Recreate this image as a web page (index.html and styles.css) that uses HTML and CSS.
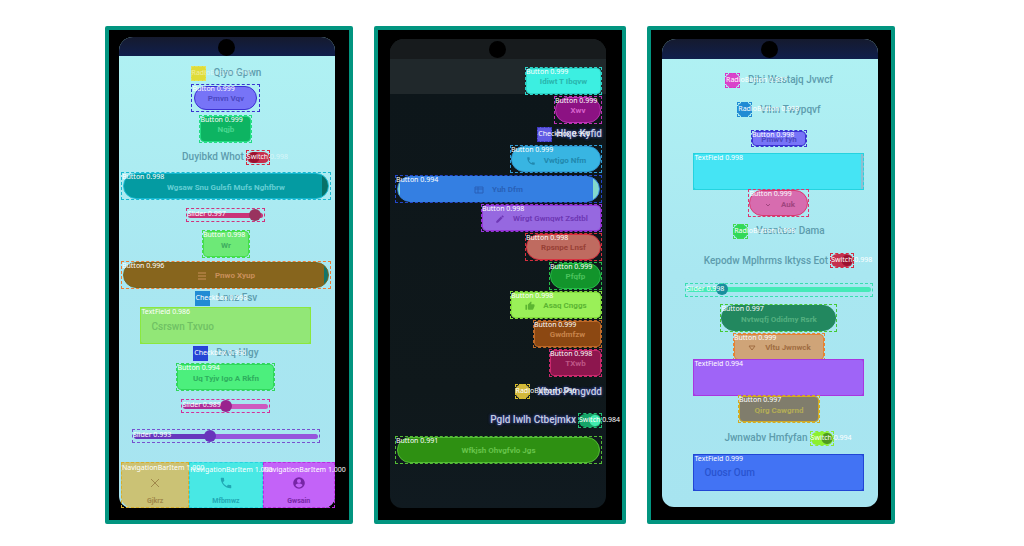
FILE: index.html
```html
<!DOCTYPE html>
<html lang="en">
<head>
<meta charset="utf-8">
<title>Widget detections</title>
<link rel="stylesheet" href="styles.css">
</head>
<body>
<main class="gallery">
  <section class="phone light one">
    <div class="screen">
      <div class="status"><i class="camera"></i></div>
      <div class="rows">
        <label class="opt"><span class="det box yellow"><input type="checkbox"><span class="tag faint">RadioButton 0.996</span></span>Qiyo Gpwn</label>
        <div class="det md indigo inset"><button class="pill">Pmvn Vqv</button><span class="tag">Button 0.999</span></div>
        <div class="det sm green"><button>Nqjb</button><span class="tag">Button 0.999</span></div>
        <label class="opt switch">Duyibkd Whot<span class="det knob red"><input type="checkbox" role="switch"><span class="tag">Switch <span class="faint">0.998</span></span></span></label>
        <div class="det wide teal"><button class="pill">Wgsaw Snu Gulsfi Mufs Nghfbrw</button><span class="tag">Button 0.998</span></div>
        <div class="det s-sm rose"><input type="range" aria-label="Level" value="96"><span class="tag">Slider 0.997</span></div>
        <div class="det xs lime"><button>Wr</button><span class="tag">Button 0.998</span></div>
        <div class="det wide brown"><button class="pill"><svg viewBox="0 0 10 10"><path d="M1 2h8M1 5h8M1 8h8"/></svg>Pnwo Xyup</button><span class="tag">Button 0.996</span></div>
        <label class="opt"><span class="det box azure"><input type="checkbox"><span class="tag">Checkbox 0.998</span></span>Lnnz Fsv</label>
        <div class="det field leaf"><input type="text" aria-label="Name" placeholder="Csrswn Txvuo"><span class="tag">TextField 0.986</span></div>
        <label class="opt"><span class="det box blue"><input type="checkbox"><span class="tag">Checkbox 0.996</span></span>Dwq Hlgy</label>
        <div class="det lg mint"><button>Uq Tyjv Igo A Rkfn</button><span class="tag">Button 0.994</span></div>
        <div class="det s-md magenta"><input type="range" aria-label="Tone" value="50"><span class="tag">Slider 0.989</span></div>
        <div class="det s-lg violet"><input type="range" aria-label="Volume" value="41"><span class="tag">Slider 0.993</span></div>
      </div>
      <nav class="tabs">
        <div class="det sand"><button><svg viewBox="0 0 14 14"><path d="M3 3l8 8M11 3l-8 8"/></svg>Gjkrz</button><span class="tag">NavigationBarItem 1.000</span></div>
        <div class="det cyan low"><button><svg viewBox="0 0 24 24"><path class="solid" d="M6.600 10.800c1.400 2.800 3.800 5.100 6.600 6.600l2.200-2.200c.3-.3.7-.4 1-.2 1.100.4 2.300.6 3.600.6.600 0 1 .4 1 1V20c0 .6-.4 1-1 1C10.600 21 3 13.400 3 4c0-.6.4-1 1-1h3.500c.6 0 1 .4 1 1 0 1.300.2 2.500.6 3.600.1.300 0 .7-.2 1z"/></svg>Mfbmwz</button><span class="tag">NavigationBarItem 1.000</span></div>
        <div class="det orchid low"><button><svg viewBox="0 0 24 24"><path class="solid" fill-rule="evenodd" d="M12 2a10 10 0 1 0 0 20 10 10 0 0 0 0-20zm0 3a3.500 3.500 0 1 1 0 7 3.500 3.500 0 0 1 0-7zm0 14.500c-2.700 0-5-1.300-6-3.500 0-2 4-3 6-3s6 1 6 3c-1 2.200-3.300 3.500-6 3.500z"/></svg>Gwsain</button><span class="tag">NavigationBarItem 1.000</span></div>
      </nav>
    </div>
  </section>

  <section class="phone dark two">
    <div class="screen">
      <div class="status"><i class="camera"></i></div>
      <div class="rows">
        <div class="det b77 aqua"><button>Idiwt T Ibqvw</button><span class="tag">Button 0.999</span></div>
        <div class="det xs plum"><button class="pill">Xwv</button><span class="tag">Button 0.999</span></div>
        <label class="opt glow tight"><span class="det box iris"><input type="checkbox" checked><span class="tag">Checkbox 0.996</span></span>Hlqe Kyfid</label>
        <div class="det b92 sky"><button class="pill"><svg viewBox="0 0 24 24"><path class="solid" d="M6.600 10.800c1.400 2.800 3.800 5.100 6.600 6.600l2.200-2.200c.3-.3.7-.4 1-.2 1.100.4 2.300.6 3.600.6.600 0 1 .4 1 1V20c0 .6-.4 1-1 1C10.600 21 3 13.400 3 4c0-.6.4-1 1-1h3.500c.6 0 1 .4 1 1 0 1.300.2 2.500.6 3.600.1.300 0 .7-.2 1z"/></svg>Vwtjgo Nfm</button><span class="tag">Button 0.999</span></div>
        <div class="det wide ocean"><button class="pill"><svg viewBox="0 0 10 10"><path d="M1 2h8v6H1zM1 4h8M4 2v6"/></svg>Yuh Dfm</button><span class="tag">Button 0.994</span></div>
        <div class="det b121 lilac"><button><svg viewBox="0 0 24 24"><path class="solid" d="M3 17.200V21h3.800L17.900 9.900l-3.800-3.800zM20.700 7a1 1 0 0 0 0-1.400l-2.300-2.300a1 1 0 0 0-1.400 0l-1.900 1.800 3.800 3.800z"/></svg>Wirgt Gwnqwt Zsdtbl</button><span class="tag">Button 0.998</span></div>
        <div class="det b77 coral"><button class="pill">Rpsnpe Lnsf</button><span class="tag">Button 0.998</span></div>
        <div class="det sm forest"><button class="pill">Pfqfp</button><span class="tag">Button 0.999</span></div>
        <div class="det b92 chart"><button><svg viewBox="0 0 24 24"><path class="solid" d="M1 21h4V9H1zm22-11c0-1.100-.9-2-2-2h-6.300l1-4.600c0-.7-.3-1.100-.5-1.400L14.200 1 7.600 7.600C7.200 8 7 8.500 7 9v10c0 1.100.9 2 2 2h9c.8 0 1.500-.5 1.800-1.200l3-7.100z"/></svg>Asaq Cnggs</button><span class="tag">Button 0.998</span></div>
        <div class="det md rust"><button>Gwdmfzw</button><span class="tag">Button 0.999</span></div>
        <div class="det sm wine"><button>TXwb</button><span class="tag">Button 0.998</span></div>
        <label class="opt glow"><span class="det box gold"><input type="radio" name="r2"><span class="tag">RadioButton 0.996</span></span>Xbub Pvngvdd</label>
        <label class="opt glow switch">Pgld Iwlh Ctbejmkx<span class="det knob jade on"><input type="checkbox" role="switch" checked><span class="tag">Switch 0.984</span></span></label>
        <div class="det wide grass"><button class="pill">Wfkjsh Ohvgfvlo Jgs</button><span class="tag">Button 0.991</span></div>
      </div>
    </div>
  </section>

  <section class="phone light three">
    <div class="screen">
      <div class="status"><i class="camera"></i></div>
      <div class="rows">
        <label class="opt"><span class="det box pink"><input type="radio" name="r3"><span class="tag">RadioButton 0.997</span></span>Djhi Wastajq Jvwcf</label>
        <label class="opt"><span class="det box azure"><input type="radio" name="r3"><span class="tag">RadioButton 0.998</span></span>Vihn Twypqvf</label>
        <div class="det short indigo"><button>Pmwv fyh</button><span class="tag">Button 0.998</span></div>
        <div class="det field cyan edge"><input type="text" aria-label="Notes"><span class="tag">TextField 0.998</span></div>
        <div class="det b60 blush"><button class="pill"><svg viewBox="0 0 10 10"><path d="M3 4l2 2 2-2"/></svg>Auk</button><span class="tag">Button 0.999</span></div>
        <label class="opt"><span class="det box lawn"><input type="radio" name="r3"><span class="tag">RadioButton 0.998</span></span>Vasntusr Dama</label>
        <label class="opt switch">Kepodw Mplhrms Iktyss Eot<span class="det knob red on"><input type="checkbox" role="switch" checked><span class="tag">Switch 0.998</span></span></label>
        <div class="det s-lg sea"><input type="range" aria-label="Speed" value="17"><span class="tag">Slider 0.998</span></div>
        <div class="det b117 pine"><button class="pill">Nvtwqfj Odidmy Rsrk</button><span class="tag">Button 0.997</span></div>
        <div class="det b92 tan"><button><svg viewBox="0 0 10 10"><path d="M2 3l3 4 3-4z"/></svg>Vltu Jwnwck</button><span class="tag">Button 0.999</span></div>
        <div class="det field purple"><input type="text" aria-label="Details"><span class="tag">TextField 0.994</span></div>
        <div class="det b80 olive"><button>Qirg Cawgrnd</button><span class="tag">Button 0.997</span></div>
        <label class="opt switch">Jwnwabv Hmfyfan<span class="det knob acid on"><input type="checkbox" role="switch" checked><span class="tag">Switch 0.994</span></span></label>
        <div class="det field royal"><input type="text" aria-label="Title" placeholder="Ouosr Oum"><span class="tag">TextField 0.999</span></div>
      </div>
    </div>
  </section>
</main>
</body>
</html>
```
FILE: styles.css
```css
* { box-sizing: border-box; }

body {
  margin: 0;
  background: #fff;
  font-family: Roboto, "Liberation Sans", sans-serif;
  font-size: 10px;
  line-height: 14px;
}

.gallery {
  display: grid;
  grid-template-columns: 248fr 252fr 248fr;
  gap: 21px;
  min-height: 100vh;
  padding: 26px 12.6% 22px 10.25%;
}

.phone {
  display: flex;
  border: 4px solid #029580;
  border-radius: 2px;
  background: #000;
  padding: 9px 13px 13px 11px;
}
.phone.one { padding: 7px 14px 12px 10px; }
.phone.two { padding: 9px 16px 12px 12px; }

.screen {
  flex: 1;
  min-width: 0;
  display: flex;
  flex-direction: column;
  border-radius: 14px 14px 12px 12px;
}
.light .screen { background: linear-gradient(#b0f2f3, #a9e7f1 50%, #a7e4f0); color: #5d9cad; }
.dark .screen { background: linear-gradient(#20282b 55px, #0d161a 55px, #0f181b 75%, #101a20); color: #c6cce0; }

.status {
  display: flex;
  justify-content: center;
  height: 20px;
  padding-top: 2px;
  border-radius: 14px 14px 0 0;
}
.light .status { background: linear-gradient(#151a2e, #101f4c); }
.one .status { height: 19px; }
.dark .status { background: #171b1d; }
.camera { width: 17px; height: 17px; border-radius: 50%; background: #000; }

.rows { display: grid; align-items: center; justify-items: center; }
.one .rows { padding: 8px 4px 0 2px; grid-template-rows: 18px 31px 31px 26px 32px 26px 32px 29px 18px 37px 18px 30px 28px 32px; }
.two .rows { padding: 7px 4px 0 5px; justify-items: end; grid-template-rows: 29px 29px 20px 30px repeat(8, 29px) 28px 31px; }
.three .rows { padding: 6px 0 0 18px; grid-template-rows: 30px 29px 29px 36px 28px 28px 31px 27px 30px 27px 35px 28px 30px 38px; }

/* Detected region: dashed outline, tinted control, score tag */
.det {
  position: relative;
  display: flex;
  height: 28px;
  color: var(--ink);
}
.det::after {
  content: "";
  position: absolute;
  inset: 0;
  border: 1px dashed var(--line);
  pointer-events: none;
}
.tag {
  position: absolute;
  z-index: 2;
  top: 1px;
  left: 1px;
  color: #fff;
  font: 7px/8px "Noto Sans", sans-serif;
  white-space: nowrap;
  pointer-events: none;
}
.faint { opacity: 0.5; }

button, input { font: inherit; color: inherit; margin: 0; }
button {
  flex: 1;
  display: flex;
  align-items: center;
  justify-content: center;
  gap: 8px;
  margin: 1px;
  padding: 3px 0 0;
  border: 1px solid var(--line);
  border-radius: 4px;
  background: var(--fill);
  font-size: 8px;
  font-weight: 700;
  line-height: 10px;
  white-space: nowrap;
}
button.pill { border-radius: 14px; }
.inset button { margin: 2px 3px; }
svg { width: 10px; height: 10px; fill: none; stroke: currentColor; stroke-width: 1; }
svg .solid { fill: currentColor; stroke: none; }

.xs { width: 48px; }
.sm { width: 53px; }
.b60 { width: 61px; }
.md { width: 69px; }
.short { width: 56px; height: 17px; }
.b77 { width: 77px; }
.b80 { width: 82px; }
.b92 { width: 92px; }
.lg { width: 99px; }
.b117 { width: 117px; }
.b121 { width: 121px; }
.wide { width: 100%; }
.wide button { margin: 1px 2px; }

.opt { display: flex; align-items: center; gap: 8px; font-weight: 500; white-space: nowrap; }
.opt.switch { gap: 2px; }
.opt.tight { gap: 4px; }
.glow { text-shadow: 0 0 3px #3947a0, 0 0 3px #28357c; }
.box { width: 15px; height: 15px; }
.box .tag, .knob .tag { top: 3px; text-shadow: none; }
.box input, .knob input {
  appearance: none;
  flex: 1;
  min-width: 0;
  background: var(--fill);
  border-radius: 3px;
}
.box input[type="radio"] { border-radius: 50%; }
.knob { width: 24px; height: 15px; }
.knob input { margin: 2px 1px; border-radius: 6px; background: radial-gradient(circle at 7px 50%, var(--ink) 5px, var(--fill) 6px); }
.knob.on input { margin: 1px; background: radial-gradient(circle at 16px 50%, var(--ink) 5px, var(--fill) 6px); }

.field { width: 171px; height: 37px; }
.field input {
  flex: 1;
  min-width: 0;
  border: 1px solid var(--line);
  border-radius: 3px;
  padding: 2px 10px 0;
  background: var(--fill);
  outline: 0;
  font-weight: 500;
}
.field input::placeholder { color: var(--ink); opacity: 1; }
.edge input { border-right: 3px solid #8dbfd0; }

.s-sm, .s-md, .s-lg { height: 14px; padding: 0 2px; }
.s-sm { width: 79px; }
.s-md { width: 89px; }
.s-lg { width: 188px; }
.s-sm .tag, .s-md .tag, .s-lg .tag { top: 2px; }
input[type="range"] { appearance: none; flex: 1; min-width: 0; background: none; }
input[type="range"]::-webkit-slider-runnable-track { height: 5px; border-radius: 3px; background: var(--fill); }
input[type="range"]::-webkit-slider-thumb { appearance: none; width: 12px; height: 12px; margin-top: -4px; border-radius: 50%; background: var(--ink); }

.tabs { display: grid; grid-template-columns: 69fr 74fr 73fr; margin-top: auto; padding: 0 0 0 2px; }
.tabs .det { height: 46px; }
.tabs button { flex-direction: column; gap: 6px; margin: 0; padding: 11px 0 0; border: 0; border-radius: 0; font-size: 7px; }
.tabs svg { width: 14px; height: 14px; }
.tabs .det:first-child button { border-radius: 0 0 0 12px; }
.tabs .det:last-child button { border-radius: 0 0 12px 0; }
.tabs .tag { top: 2px; }
.tabs .low .tag { top: 4px; }

.yellow { --fill: #dfdc38; --line: #e3e25a; --ink: #aaa51e; }
.indigo { --fill: #7774f7; --line: #3b32d2; --ink: #4c48c2; }
.green { --fill: #0db462; --line: #24dd83; --ink: #4ad891; }
.red { --fill: #c5304d; --line: #d62942; --ink: #9c1230; }
.teal { --fill: #049ba2; --line: #16b9d1; --ink: #63ced4; }
.teal button { background: linear-gradient(90deg, #049ba2 97%, #087269 97%); }
.rose { --fill: #c93378; --line: #d0327c; --ink: #99335f; }
.lime { --fill: #6de977; --line: #45df4c; --ink: #3fad60; }
.brown { --fill: #87651d; --line: #ee7c32; --ink: #c9905b; }
.brown button { border-color: #75651f; background: linear-gradient(90deg, #87651d 98%, #11756a 98%); }
.azure { --fill: #218bd4; --line: #218bd4; --ink: #176daf; }
.leaf { --fill: #92e777; --line: #8be83e; --ink: #6fc164; }
.blue { --fill: #2647d4; --line: #2c39e0; --ink: #1c3498; }
.mint { --fill: #4cef7d; --line: #30d85c; --ink: #2eae5e; }
.magenta { --fill: #ce59bf; --line: #d32f9c; --ink: #99238e; }
.magenta input::-webkit-slider-runnable-track { background: linear-gradient(90deg, #ac2e99 50%, #ce59bf 50%); }
.violet { --fill: #914fd8; --line: #7651cf; --ink: #6835bb; }
.violet input::-webkit-slider-runnable-track { background: linear-gradient(90deg, #6738bd 41%, #9653dc 41%); }
.sand { --fill: #cbc275; --line: #d8ae2b; --ink: #a0884a; }
.cyan { --fill: #48e8e4; --line: #25d3df; --ink: #21a8b4; }
.edge { --fill: #45e4f4; }
.orchid { --fill: #c363f8; --line: #bc2be1; --ink: #7726a6; }

.aqua { --fill: #3cefe1; --line: #2cd4c8; --ink: #29b5ad; }
.plum { --fill: #8c1283; --line: #bd32b4; --ink: #d761cb; }
.iris { --fill: #625ce4; --line: #3e38bf; --ink: #3732b1; }
.sky { --fill: #38b5e2; --line: #319bd6; --ink: #2188ae; }
.ocean { --fill: #347fe2; --line: #2447cb; --ink: #2861b8; }
.ocean button { border-color: #347fe2; background: linear-gradient(90deg, #83d8cc 1%, #347fe2 1%, #347fe2 97%, #83d8cc 97%); }
.lilac { --fill: #9668e0; --line: #9535d7; --ink: #6e38b5; }
.coral { --fill: #bf6b60; --line: #d82f3e; --ink: #974036; }
.forest { --fill: #12942b; --line: #27bd4a; --ink: #4cc35d; }
.chart { --fill: #9af058; --line: #84de3d; --ink: #5cb532; }
.rust { --fill: #8c4812; --line: #bf6928; --ink: #c8844a; }
.wine { --fill: #8d164e; --line: #cc286d; --ink: #bf5787; }
.gold { --fill: #d3b83c; --line: #d8bd2b; --ink: #99821e; }
.jade { --fill: #16a569; --line: #23bd73; --ink: #41eaae; }
.grass { --fill: #2e9012; --line: #54bd35; --ink: #67c44b; }

.pink { --fill: #d943ca; --line: #dc32c9; --ink: #a22196; }
.blush { --fill: #d76caf; --line: #da3770; --ink: #a1457f; }
.lawn { --fill: #31d957; --line: #42db4f; --ink: #1c9c38; }
.sea { --fill: #45eab8; --line: #38dfb0; --ink: #188e9d; }
.pine { --fill: #22885f; --line: #43c934; --ink: #54b080; }
.pine button { border-color: #22885f; }
.tan { --fill: #cfa478; --line: #e58334; --ink: #a06d42; }
.purple { --fill: #9f64f7; --line: #a837df; --ink: #6b37bd; }
.olive { --fill: #807d6c; --line: #d2ac25; --ink: #b4ad56; }
.acid { --fill: #8cf02f; --line: #8aea37; --ink: #4e9a20; }
.royal { --fill: #4273f4; --line: #2246d5; --ink: #2953cf; }
```
